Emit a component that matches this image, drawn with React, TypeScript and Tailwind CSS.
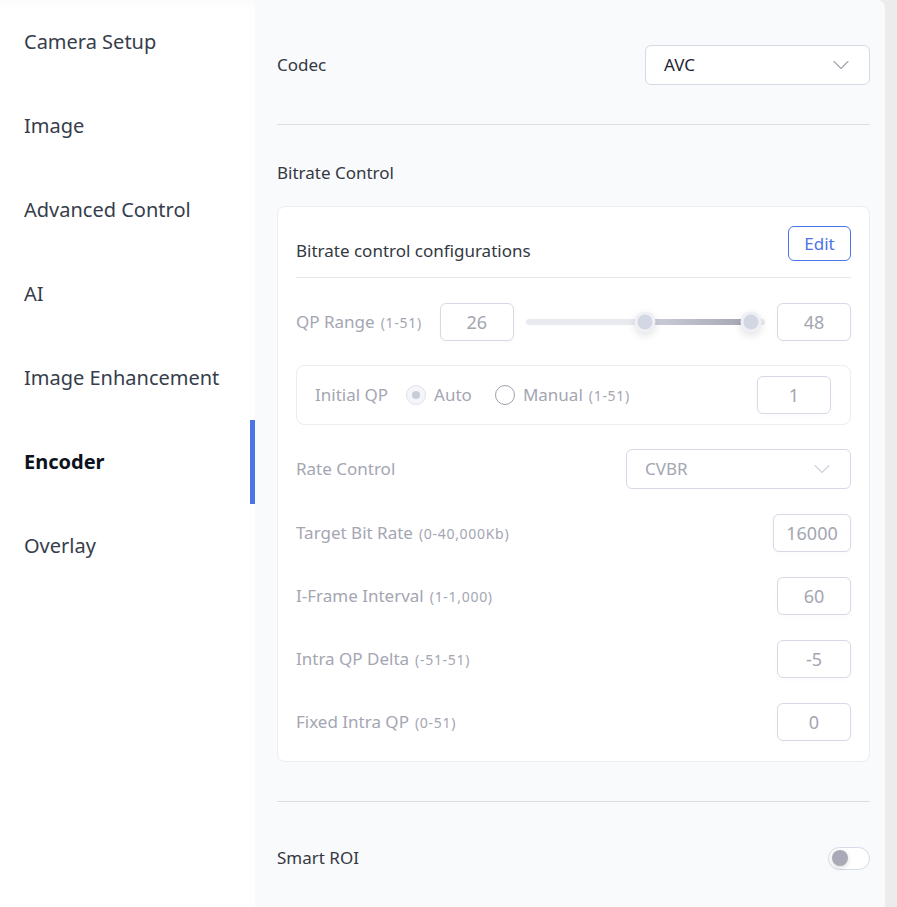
import { ChevronDown } from "lucide-react"

const navItems = ["Camera Setup", "Image", "Advanced Control", "AI", "Image Enhancement", "Encoder", "Overlay"]

function NumBox({ value, w = "w-[74px]" }: { value: string; w?: string }) {
  return (
    <div
      className={`${w} h-[38px] shrink-0 flex items-center justify-center rounded-md border border-[#d6d9e6] bg-white text-[18px] text-[#a4a6b2] shadow-[0_2px_6px_rgba(0,0,0,0.02)]`}
    >
      {value}
    </div>
  )
}

function Label({ text, hint }: { text: string; hint?: string }) {
  return (
    <span className="text-[17px] text-[#a4a6b2]">
      {text}
      {hint && <span className="ml-[6px] text-[14px] tracking-[0.05em]">{hint}</span>}
    </span>
  )
}

function FieldRow({ text, hint, value, w }: { text: string; hint: string; value: string; w?: string }) {
  return (
    <div className="mt-[25px] flex items-center justify-between">
      <Label text={text} hint={hint} />
      <NumBox value={value} w={w} />
    </div>
  )
}

function RangeSlider({ min, max, low, high }: { min: number; max: number; low: number; high: number }) {
  const a = ((low - min) / (max - min)) * 100
  const b = ((high - min) / (max - min)) * 100
  return (
    <div className="relative mx-3 h-[6px] flex-1 rounded-full bg-[#e9eaef]">
      <div
        className="absolute top-0 h-full bg-gradient-to-r from-[#cdd0da] to-[#a3a5b2]"
        style={{ left: `${a}%`, width: `${b - a}%` }}
      />
      {[a, b].map((p) => (
        <div
          key={p}
          className="absolute top-1/2 h-[21px] w-[21px] -translate-x-1/2 -translate-y-1/2 rounded-full border-[3px] border-[#eef0f4] bg-[#d3d7e4] shadow-[0_3px_8px_rgba(0,0,0,0.12)]"
          style={{ left: `${p}%` }}
        />
      ))}
    </div>
  )
}

export default function App() {
  return (
    <div
      className="flex min-h-[907px] w-[897px] bg-[#ececec]"
      style={{ fontFamily: '"Noto Sans", "Open Sans", sans-serif' }}
    >
      {/* sidebar */}
      <aside className="w-[255px] shrink-0 bg-white shadow-[inset_0_14px_10px_-10px_rgba(0,0,0,0.025)]">
        {navItems.map((item) => {
          const active = item === "Encoder"
          return (
            <div key={item} className="relative flex h-[84px] items-center pl-6">
              <span
                className={
                  active ? "text-[20px] font-bold text-[#0d1220]" : "text-[20px] text-[#363d4b]"
                }
              >
                {item}
              </span>
              {active && <div className="absolute right-0 top-0 h-full w-[5px] bg-[#4a74e8]" />}
            </div>
          )
        })}
      </aside>

      {/* main */}
      <main className="mr-[12px] flex-1 rounded-tr-lg bg-[#f9fafc] pl-[22px] pr-[15px] pt-[45px] pb-[37px]">
        <div className="flex items-center justify-between">
          <span className="text-[17px] text-[#333842]">Codec</span>
          <div className="flex h-10 w-[225px] items-center justify-between rounded-md border border-[#d6d9e6] bg-white pl-[18px] pr-[14px]">
            <span className="text-[17px] text-[#1f2430]">AVC</span>
            <ChevronDown size={28} strokeWidth={1} className="text-[#a2a4b0]" />
          </div>
        </div>

        <div className="mt-[39px] h-px bg-[#dcdde4]" />

        <div className="mt-[36px] text-[17px] leading-6 text-[#333842]">Bitrate Control</div>

        <section className="mt-[21px] rounded-lg border border-[#ebedf2] bg-white px-[18px] pt-[19px] pb-[20px]">
          <div className="flex items-end justify-between border-b border-[#e6e8ee] pb-[16px]">
            <span className="mb-[-2px] text-[17px] leading-6 text-[#333842]">Bitrate control configurations</span>
            <button className="flex h-[35px] w-[63px] items-center justify-center rounded-md border border-[#4a74e8] text-[17px] text-[#4a74e8]">
              Edit
            </button>
          </div>

          <div className="mt-[25px] flex items-center">
            <div className="mr-[18px]">
              <Label text="QP Range" hint="(1-51)" />
            </div>
            <NumBox value="26" />
            <RangeSlider min={1} max={51} low={26} high={48} />
            <NumBox value="48" />
          </div>

          <div className="mt-[24px] flex h-[60px] items-center justify-between rounded-lg border border-[#ebedf2] pl-[18px] pr-[19px]">
            <div className="flex items-center">
              <span className="text-[17px] text-[#a4a6b2]">Initial QP</span>
              <div className="ml-[18px] flex items-center">
                <span className="flex h-[20px] w-[20px] items-center justify-center rounded-full border border-[#dfe1e9] bg-[#f5f6f9]">
                  <span className="h-[8px] w-[8px] rounded-full bg-[#c9cdda]" />
                </span>
                <span className="ml-2 text-[17px] text-[#a4a6b2]">Auto</span>
              </div>
              <div className="ml-[23px] flex items-center">
                <span className="h-[20px] w-[20px] rounded-full border-[1.5px] border-[#9d9fac] bg-white" />
                <span className="ml-2 text-[17px] text-[#a4a6b2]">
                  Manual<span className="ml-[6px] text-[14px] tracking-[0.05em]">(1-51)</span>
                </span>
              </div>
            </div>
            <NumBox value="1" />
          </div>

          <div className="mt-[24px] flex items-center justify-between">
            <Label text="Rate Control" />
            <div className="flex h-10 w-[225px] items-center justify-between rounded-md border border-[#d6d9e6] bg-white pl-[18px] pr-[14px]">
              <span className="text-[17px] text-[#a4a6b2]">CVBR</span>
              <ChevronDown size={28} strokeWidth={1} className="text-[#d2d4dc]" />
            </div>
          </div>

          <FieldRow text="Target Bit Rate" hint="(0-40,000Kb)" value="16000" w="w-[78px]" />
          <FieldRow text="I-Frame Interval" hint="(1-1,000)" value="60" />
          <FieldRow text="Intra QP Delta" hint="(-51-51)" value="-5" />
          <FieldRow text="Fixed Intra QP" hint="(0-51)" value="0" />
        </section>

        <div className="mt-[39px] h-px bg-[#dcdde4]" />

        <div className="mt-[36px] flex h-10 items-center justify-between">
          <span className="text-[17px] text-[#333842]">Smart ROI</span>
          <div className="relative h-[23px] w-[42px] rounded-full border border-[#d6d9e6] bg-white">
            <span className="absolute left-[3px] top-1/2 h-[16px] w-[16px] -translate-y-1/2 rounded-full bg-[#aaa9b7] shadow-[0_2px_5px_rgba(0,0,0,0.15)]" />
          </div>
        </div>
      </main>
    </div>
  )
}
